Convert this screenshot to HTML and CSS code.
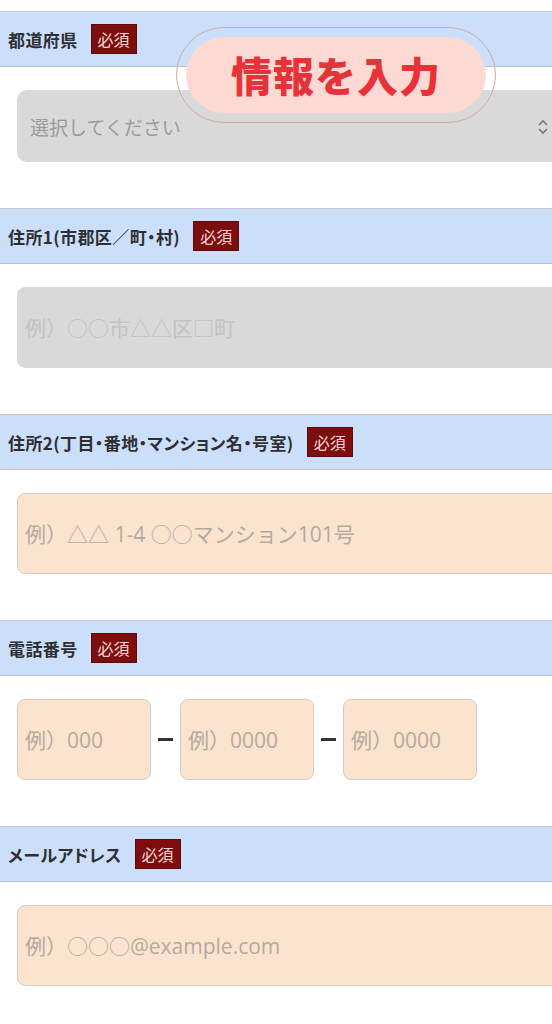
FILE: index.html
```html
<!DOCTYPE html>
<html lang="ja">
<head>
	<meta charset="UTF-8">
	<title>情報を入力</title>
	<link rel="stylesheet" href="styles.css">
</head>
<body>
	<div class="page">
		<div class="title-pill">
			<div class="title-inner">情報を入力</div>
		</div>

		<section class="field">
			<div class="field-head">
				<span class="label">都道府県</span>
				<span class="badge">必須</span>
			</div>
			<div class="field-body">
				<div class="select">
					<span>選択してください</span>
					<svg class="select-arrow" width="12" height="16" viewBox="0 0 12 16">
						<path d="M2 6 L6 2 L10 6 M2 10 L6 14 L10 10" fill="none" stroke="#777" stroke-width="1.6"/>
					</svg>
				</div>
			</div>
		</section>

		<section class="field">
			<div class="field-head">
				<span class="label">住所1(市郡区／町・村)</span>
				<span class="badge">必須</span>
			</div>
			<div class="field-body">
				<input class="input input-gray" type="text" placeholder="例）○○市△△区□町">
			</div>
		</section>

		<section class="field">
			<div class="field-head">
				<span class="label">住所2(丁目・番地・マンション名・号室)</span>
				<span class="badge">必須</span>
			</div>
			<div class="field-body">
				<input class="input" type="text" placeholder="例）△△ 1-4 ○○マンション101号">
			</div>
		</section>

		<section class="field">
			<div class="field-head">
				<span class="label">電話番号</span>
				<span class="badge">必須</span>
			</div>
			<div class="field-body tel-row">
				<input class="input input-tel" type="text" placeholder="例）000">
				<span class="dash"></span>
				<input class="input input-tel" type="text" placeholder="例）0000">
				<span class="dash"></span>
				<input class="input input-tel" type="text" placeholder="例）0000">
			</div>
		</section>

		<section class="field">
			<div class="field-head">
				<span class="label">メールアドレス</span>
				<span class="badge">必須</span>
			</div>
			<div class="field-body">
				<input class="input" type="text" placeholder="例）○○○@example.com">
			</div>
		</section>
	</div>
</body>
</html>
```

FILE: styles.css
```css
* {
	padding: 0;
	margin: 0;
	box-sizing: border-box;
}
html, body {
	background: #fff;
	overflow: hidden;
}
body {
	font-family: "Noto Sans CJK JP", "Noto Sans", sans-serif;
	color: #333;
}
.page {
	position: relative;
	width: 552px;
	padding-top: 11px;
}
.field {
	margin-bottom: 46px;
}
.field-head {
	display: flex;
	align-items: center;
	gap: 13px;
	height: 56px;
	padding-left: 8px;
	background: #cbdffb;
	border-top: 1px solid #c3cad6;
	border-bottom: 1px solid #b8c0cc;
}
.label {
	font-size: 17px;
	font-weight: bold;
	color: #2f2f33;
	font-feature-settings: "palt";
	letter-spacing: 0.4px;
}
.badge {
	display: inline-flex;
	align-items: center;
	justify-content: center;
	width: 46px;
	height: 30px;
	background: #7c0e0e;
	border: 1px solid #5e0a0a;
	color: #f5d3d3;
	font-size: 16px;
}
.field-body {
	padding: 23px 0 0 17px;
}
.select {
	display: flex;
	align-items: center;
	justify-content: space-between;
	width: 560px;
	height: 72px;
	padding: 0 28px 0 13px;
	background: #d9d9d9;
	border-radius: 10px;
	font-size: 19px;
	color: #9a9a9a;
}
.select-arrow {
	margin-top: 2px;
}
.input {
	display: block;
	width: 560px;
	height: 81px;
	padding: 0 7px;
	background: #fce3cd;
	border: 1px solid #d9cbbf;
	border-radius: 8px;
	font-family: "Open Sans", "Noto Sans CJK JP", sans-serif;
	font-size: 21px;
	color: #333;
	outline: none;
}
.input::placeholder {
	color: #b3aaa2;
}
.input-gray {
	background: #d9d9d9;
	border-color: #d9d9d9;
}
.input-gray::placeholder {
	color: #c2c2c2;
}
.tel-row {
	display: flex;
	align-items: center;
}
.input-tel {
	width: 134px;
}
.dash {
	width: 15px;
	height: 3px;
	margin: 0 7px;
	background: #333;
}
.title-pill {
	position: absolute;
	left: 176px;
	top: 27px;
	width: 320px;
	height: 96px;
	padding: 9px;
	border: 1px solid #d6a8a1;
	border-radius: 48px;
}
.title-inner {
	display: flex;
	align-items: center;
	justify-content: center;
	height: 100%;
	background: #fdd9d3;
	border-radius: 40px;
	color: #e8323a;
	font-size: 41px;
	font-weight: 900;
	letter-spacing: 1px;
	padding-bottom: 2px;
}
```
